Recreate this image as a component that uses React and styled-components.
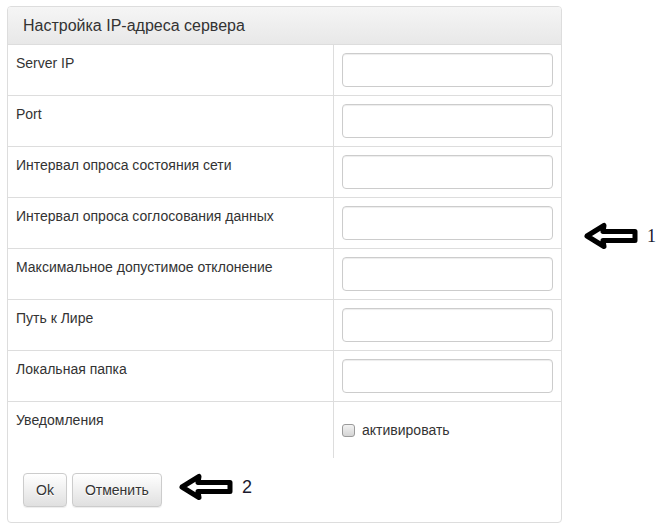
import styled, { createGlobalStyle } from "styled-components";

const GlobalStyle = createGlobalStyle`
  * { box-sizing: border-box; }
  body {
    margin: 0;
    background: #fff;
    font-family: "Liberation Sans", Arial, sans-serif;
    color: #333;
  }
`;

const Page = styled.div`
  position: relative;
  width: 666px;
  height: 531px;
  padding: 6px 0 0 7px;
`;

const Panel = styled.div`
  width: 555px;
  border: 1px solid #ddd;
  border-radius: 4px;
  background: #fff;
  overflow: hidden;
`;

const PanelHeading = styled.div`
  padding: 9px 15px 8px 15px;
  font-size: 16px;
  line-height: 20px;
  color: #333;
  background: linear-gradient(to bottom, #f5f5f5 0%, #e8e8e8 100%);
  border-bottom: 1px solid #ddd;
`;

const Table = styled.div`
  display: grid;
  grid-template-columns: 326px 1fr;
`;

const Row = styled.div`
  display: contents;
`;

const LabelCell = styled.div`
  padding: 8px 10px 8px 8px;
  font-size: 14px;
  line-height: 20px;
  color: #333;
  border-right: 1px solid #ddd;
  border-top: ${(p) => (p.$first ? "none" : "1px solid #ddd")};
`;

const FieldCell = styled.div`
  padding: 8px;
  border-top: ${(p) => (p.$first ? "none" : "1px solid #ddd")};
`;

const Input = styled.input`
  display: block;
  width: 100%;
  height: 34px;
  border: 1px solid #ccc;
  border-radius: 4px;
  box-shadow: inset 0 1px 1px rgba(0, 0, 0, 0.075);
  padding: 6px 12px;
  font-size: 14px;
  outline: none;
`;

const CheckLine = styled.label`
  display: flex;
  align-items: center;
  gap: 7px;
  margin: 10px 0;
  height: 20px;
  font-size: 14px;
  color: #333;
`;

const Check = styled.input`
  appearance: none;
  width: 13px;
  height: 13px;
  margin: 0;
  border: 1px solid #9a9a9a;
  border-radius: 3px;
  background: linear-gradient(to bottom, #f2f2f2 0%, #d4d4d4 100%);
`;

const Footer = styled.div`
  display: flex;
  gap: 5px;
  padding: 15px;
`;

const Button = styled.button`
  height: 34px;
  padding: 6px 12px;
  font-family: "Liberation Sans", Arial, sans-serif;
  font-size: 14px;
  line-height: 20px;
  color: #333;
  text-shadow: 0 1px 0 #fff;
  background: linear-gradient(to bottom, #fff 0%, #e0e0e0 100%);
  border: 1px solid #ccc;
  border-radius: 4px;
  box-shadow: inset 0 1px 0 rgba(255, 255, 255, 0.15), 0 1px 1px rgba(0, 0, 0, 0.075);
`;

const Note = styled.div`
  position: absolute;
  left: ${(p) => p.$x}px;
  top: ${(p) => p.$y}px;
  display: flex;
  align-items: center;
  gap: 8px;
`;

const NoteNum = styled.span`
  font-family: ${(p) => (p.$serif ? '"Liberation Serif", serif' : '"Liberation Sans", sans-serif')};
  font-size: 18px;
  color: #1a1a2e;
  line-height: 1;
`;

const Arrow = () => (
  <svg width="56" height="28" viewBox="0 0 56 28">
    <path
      d="M4 14 L21 3.5 L20 9.5 L52 9.5 L52 18.5 L20 18.5 L21 24.5 Z"
      fill="#fff"
      stroke="#000"
      strokeWidth="5"
      strokeLinejoin="round"
    />
  </svg>
);

const fields = [
  "Server IP",
  "Port",
  "Интервал опроса состояния сети",
  "Интервал опроса соглосования данных",
  "Максимальное допустимое отклонение",
  "Путь к Лире",
  "Локальная папка",
];

export default function App() {
  return (
    <>
      <GlobalStyle />
      <Page>
        <Panel>
          <PanelHeading>Настройка IP-адреса сервера</PanelHeading>
          <Table>
            {fields.map((f, i) => (
              <Row key={f}>
                <LabelCell $first={i === 0}>{f}</LabelCell>
                <FieldCell $first={i === 0}>
                  <Input type="text" />
                </FieldCell>
              </Row>
            ))}
            <Row>
              <LabelCell>Уведомления</LabelCell>
              <FieldCell>
                <CheckLine>
                  <Check type="checkbox" />
                  активировать
                </CheckLine>
              </FieldCell>
            </Row>
          </Table>
          <Footer>
            <Button>Ok</Button>
            <Button>Отменить</Button>
          </Footer>
        </Panel>
        <Note $x={583} $y={222}>
          <Arrow />
          <NoteNum $serif>1</NoteNum>
        </Note>
        <Note $x={178} $y={473}>
          <Arrow />
          <NoteNum>2</NoteNum>
        </Note>
      </Page>
    </>
  );
}
